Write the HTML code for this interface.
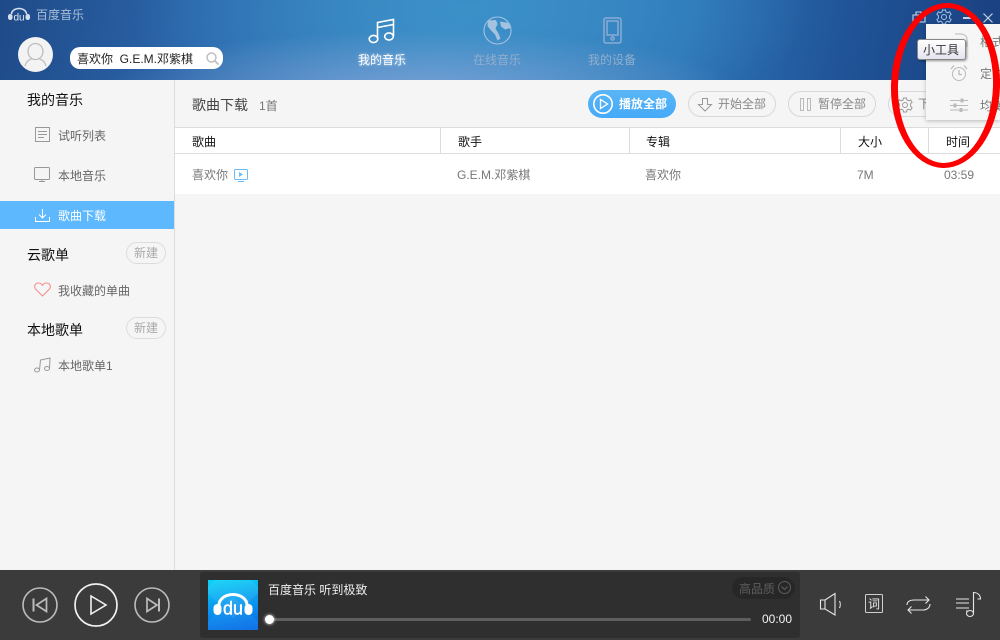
<!DOCTYPE html>
<html lang="zh"><head><meta charset="utf-8"><style>
html,body{margin:0;padding:0}
body{width:1000px;height:640px;overflow:hidden;position:relative;background:#f5f5f5;font-family:"Liberation Sans","Noto Sans CJK SC",sans-serif;font-size:12px;color:#666}
.t{position:absolute;white-space:nowrap;line-height:16px}
.a{position:absolute}
svg{position:absolute;overflow:visible;fill:none}
#hd{left:0;top:0;width:1000px;height:80px;background:radial-gradient(ellipse 320px 62px at 420px 92px,rgba(130,165,215,.85),rgba(125,160,210,0) 100%),radial-gradient(ellipse 340px 130px at 470px 10px,#3b90c8,rgba(59,144,200,0) 100%),linear-gradient(100deg,#1f4a88 0,#2b66ab 20%,#3b86c3 45%,#2d74b6 68%,#1f5296 85%,#1a407f 100%)}
.btn{position:absolute;top:91px;height:24px;border:1px solid #d9d9d9;border-radius:13px;box-sizing:content-box}
.new{position:absolute;left:126px;width:40px;height:22px;border:1px solid #dcdcdc;border-radius:11px;box-sizing:border-box;font-size:12px;line-height:20px;text-align:center;color:#aaa}
.th{color:#111;top:134px}
.sep{position:absolute;top:128px;width:1px;height:25px;background:#dcdcdc}
.hs{font-size:14px;color:#111}
</style></head><body>
<div class="a" id="hd"></div>
<svg style="left:8px;top:8px" width="22" height="13" viewBox="0 0 22 13"><path d="M3.500 6a7.500 5.500 0 0 1 15 0" stroke="#d3dfec" stroke-width="1.600"/><rect x="0" y="6" width="4.500" height="6" rx="2.200" fill="#d3dfec"/><rect x="17.500" y="6" width="4.500" height="6" rx="2.200" fill="#d3dfec"/><text x="11" y="12.500" text-anchor="middle" font-size="10" font-family="Liberation Sans" fill="#e4ebf3">du</text></svg>
<div class="t" style="left:36px;top:7px;color:#a9bfd8">百度音乐</div>
<div class="a" style="left:18px;top:37px;width:35px;height:35px;border-radius:50%;background:#f3f3f3"></div>
<svg style="left:18px;top:37px" width="35" height="35" viewBox="0 0 35 35"><ellipse cx="17.500" cy="14.500" rx="7.500" ry="8" stroke="#bdbdbd" stroke-width="1.300"/><path d="M7 29c1-4 3-6 6.500-7M28 29c-1-4-3-6-6.500-7" stroke="#bdbdbd" stroke-width="1.300"/></svg>
<div class="a" style="left:70px;top:47px;width:153px;height:22px;border-radius:10px;background:#fff"></div>
<div class="t" style="left:77px;top:51px;color:#222">喜欢你&nbsp; G.E.M.邓紫棋</div>
<svg style="left:206px;top:52px" width="13" height="13" viewBox="0 0 13 13"><circle cx="5.500" cy="5.500" r="4.500" stroke="#c0c0c0" stroke-width="1.500"/><path d="M9 9l3.500 3.500" stroke="#c0c0c0" stroke-width="1.800"/></svg>

<svg style="left:368px;top:18px" width="28" height="26" viewBox="0 0 28 26" stroke="#fff" stroke-width="1.600"><ellipse cx="5.500" cy="21" rx="4.300" ry="3.600"/><ellipse cx="21" cy="18.500" rx="4.300" ry="3.600"/><path d="M9.500 20.500V4.500L25.500 1.500V18M9.500 9.500l16-3"/></svg>
<div class="t" style="left:358px;top:52px;color:#fff;text-shadow:0 0 3px rgba(255,255,255,.6)">我的音乐</div>
<svg style="left:483px;top:16px" width="29" height="29" viewBox="0 0 29 29"><circle cx="14.500" cy="14.500" r="13.500" stroke="#a3c2e0" stroke-width="1.100"/><path d="M5 4.500L13 4l1.500 4-2 4.500 3 5 2 5-3 2-2.500-6-4-4-3.500-4.500zM17 5.500l9 1.500 1.500 5-5.500 1.500-4-3z" fill="#a3c2e0"/></svg>
<div class="t" style="left:473px;top:52px;color:#91aecd">在线音乐</div>
<svg style="left:603px;top:17px" width="19" height="27" viewBox="0 0 19 27" stroke="#8aacd4" stroke-width="1.500"><rect x="1" y="1" width="17" height="25" rx="2"/><rect x="4" y="4" width="11" height="14"/><circle cx="9.500" cy="21.500" r="1.600"/></svg>
<div class="t" style="left:588px;top:52px;color:#91aecd">我的设备</div>

<svg style="left:912px;top:11px" width="14" height="12" viewBox="0 0 14 12" stroke="#c9d6e6" stroke-width="1.100"><path d="M1 4h12v7H1zM4 4V1h5v3"/></svg>
<svg style="left:936px;top:9px" width="16" height="16" viewBox="0 0 16 16" stroke="#a9c0dc" stroke-width="1"><path d="M6.500 1h3l.5 2 1.800.8 1.800-1 1.500 2.600-1.500 1.200v2.800l1.500 1.200-1.500 2.600-1.800-1-1.800.8-.5 2h-3l-.5-2-1.800-.8-1.800 1L.9 10.600l1.500-1.200V6.600L.9 5.400l1.500-2.600 1.800 1L6 3z"/><circle cx="8" cy="8" r="2.500"/></svg>
<div class="a" style="left:963px;top:17px;width:10px;height:2px;background:#c5d3e4"></div>
<svg style="left:983px;top:13px" width="10" height="10" viewBox="0 0 10 10" stroke="#c5d3e4" stroke-width="1.200"><path d="M.5.500l9 9M9.500.500l-9 9"/></svg>

<!-- sidebar -->
<div class="a" style="left:174px;top:80px;width:1px;height:490px;background:#dcdcdc"></div>
<div class="t hs" style="left:27px;top:92px">我的音乐</div>
<svg style="left:35px;top:127px" width="15" height="15" viewBox="0 0 15 15" stroke="#999"><rect x=".5" y=".5" width="14" height="14"/><path d="M3 4.500h9M3 7.500h9M3 10.500h6"/></svg>
<div class="t" style="left:58px;top:128px">试听列表</div>
<svg style="left:34px;top:167px" width="16" height="15" viewBox="0 0 16 15" stroke="#999"><rect x=".5" y=".5" width="15" height="12" rx="1"/><path d="M5 14.500h6M7 13h2"/></svg>
<div class="t" style="left:58px;top:168px">本地音乐</div>
<div class="a" style="left:0;top:201px;width:174px;height:28px;background:#5db8fd"></div>
<svg style="left:35px;top:209px" width="15" height="13" viewBox="0 0 15 13" stroke="#fff"><path d="M7.500 0v9M4 5.500l3.500 3.500 3.500-3.500M.5 8v4.500h14V8"/></svg>
<div class="t" style="left:58px;top:208px;color:#fff">歌曲下载</div>
<div class="t hs" style="left:27px;top:247px">云歌单</div>
<div class="new" style="top:242px">新建</div>
<svg style="left:34px;top:282px" width="17" height="15" viewBox="0 0 17 15" stroke="#f58e8e" stroke-width="1.100"><path d="M8.500 14L1.500 7C-.5 4 1.500 1 4.500 1c2 0 3.200 1 4 2.300C9.300 2 10.500 1 12.500 1c3 0 5 3 3 6z"/></svg>
<div class="t" style="left:58px;top:283px">我收藏的单曲</div>
<div class="t hs" style="left:27px;top:322px">本地歌单</div>
<div class="new" style="top:317px">新建</div>
<svg style="left:34px;top:357px" width="17" height="16" viewBox="0 0 17 16" stroke="#999"><ellipse cx="3" cy="13" rx="2.500" ry="2"/><ellipse cx="13" cy="11.500" rx="2.500" ry="2"/><path d="M5.500 13L6.500 3 16 1l-.5 10.500"/></svg>
<div class="t" style="left:58px;top:358px">本地歌单1</div>

<!-- main -->
<div class="t" style="left:192px;top:97px;color:#444;font-size:14px">歌曲下载</div>
<div class="t" style="left:259px;top:98px;color:#777">1首</div>
<div class="a" style="left:588px;top:90px;width:88px;height:28px;border-radius:14px;background:linear-gradient(#5ab5f5,#46aaf8)"></div>
<svg style="left:593px;top:94px" width="20" height="20" viewBox="0 0 20 20" stroke="#fff"><circle cx="10" cy="10" r="9.200" stroke-width="1.600"/><path d="M7.500 5.500v9l7-4.500z" stroke-width="1.300"/></svg>
<div class="t" style="left:619px;top:96px;color:#fff;font-weight:bold">播放全部</div>
<div class="btn" style="left:688px;width:86px"></div>
<svg style="left:698px;top:97px" width="14" height="15" viewBox="0 0 14 15" stroke="#999"><path d="M4.500 1.500h5v6h4L7 14 .5 7.500h4z"/></svg>
<div class="t" style="left:718px;top:96px;color:#888">开始全部</div>
<div class="btn" style="left:788px;width:86px"></div>
<svg style="left:800px;top:98px" width="11" height="13" viewBox="0 0 11 13" stroke="#bbb"><rect x=".5" y=".5" width="3" height="12"/><rect x="7.500" y=".5" width="3" height="12"/></svg>
<div class="t" style="left:818px;top:96px;color:#888">暂停全部</div>
<div class="btn" style="left:888px;width:60px"></div>
<svg style="left:897px;top:97px" width="16" height="16" viewBox="0 0 16 16" stroke="#999" stroke-width="1"><path d="M6.500 1h3l.5 2 1.800.8 1.800-1 1.500 2.600-1.500 1.200v2.800l1.500 1.200-1.500 2.600-1.800-1-1.800.8-.5 2h-3l-.5-2-1.800-.8-1.800 1L.9 10.600l1.500-1.200V6.600L.9 5.400l1.500-2.600 1.800 1L6 3z"/><circle cx="8" cy="8" r="2.500"/></svg>
<div class="t" style="left:918px;top:96px;color:#888">下</div>

<div class="a" style="left:175px;top:127px;width:825px;height:67px;background:#fff"></div>
<div class="a" style="left:175px;top:127px;width:825px;height:1px;background:#dcdcdc"></div>
<div class="a" style="left:175px;top:153px;width:825px;height:1px;background:#dcdcdc"></div>
<div class="sep" style="left:440px"></div><div class="sep" style="left:629px"></div><div class="sep" style="left:840px"></div><div class="sep" style="left:928px"></div>
<div class="t th" style="left:192px">歌曲</div>
<div class="t th" style="left:458px">歌手</div>
<div class="t th" style="left:646px">专辑</div>
<div class="t th" style="left:858px">大小</div>
<div class="t th" style="left:946px">时间</div>
<div class="t" style="left:192px;top:167px;color:#777">喜欢你</div>
<svg style="left:234px;top:169px" width="14" height="13" viewBox="0 0 14 13"><rect x=".5" y=".5" width="13" height="10" rx="1" stroke="#6cbcf8"/><path d="M5 3v5l4-2.500z" fill="#6cbcf8"/><path d="M4 12.500h6" stroke="#6cbcf8"/></svg>
<div class="t" style="left:457px;top:167px;color:#777">G.E.M.邓紫棋</div>
<div class="t" style="left:645px;top:167px;color:#777">喜欢你</div>
<div class="t" style="left:857px;top:167px;color:#777">7M</div>
<div class="t" style="left:944px;top:167px;color:#777">03:59</div>

<!-- dropdown -->
<div class="a" style="left:926px;top:24px;width:74px;height:96px;background:#f6f6f6;box-shadow:0 1px 4px rgba(0,0,0,.25)"></div>
<svg style="left:952px;top:33px" width="16" height="14" viewBox="0 0 16 14" stroke="#bbb"><path d="M3 1h6c3 0 6 2 6 5v8"/></svg>
<div class="t" style="left:980px;top:34px;color:#777">格式</div>
<svg style="left:950px;top:64px" width="18" height="18" viewBox="0 0 18 18" stroke="#bbb"><circle cx="9" cy="10" r="6.500"/><path d="M9 6v4.500h3M1 5l3-3.500M17 5l-3-3.500" stroke-width="1.300"/></svg>
<div class="t" style="left:980px;top:66px;color:#777">定时</div>
<svg style="left:950px;top:98px" width="18" height="14" viewBox="0 0 18 14" stroke="#bbb"><path d="M0 2.500h18M0 7.500h18M0 12h18"/><path d="M11 1h2v3h-2zM4 6h2v3H4zM10 10.500h2v3h-2z" fill="#bbb"/></svg>
<div class="t" style="left:980px;top:98px;color:#777">均衡</div>
<div class="a" style="left:917px;top:39px;width:49px;height:21px;border:1px solid #888;border-radius:3px;box-sizing:border-box;background:linear-gradient(#fff,#e4e4f0);box-shadow:1px 1px 2px rgba(0,0,0,.4)"></div>
<div class="t" style="left:923px;top:42px;color:#333">小工具</div>

<!-- player -->
<div class="a" style="left:0;top:570px;width:1000px;height:70px;background:#3b3b3b"></div>
<div class="a" style="left:200px;top:572px;width:600px;height:66px;background:#2f2f2f;border-radius:3px"></div>
<svg style="left:22px;top:587px" width="36" height="36" viewBox="0 0 36 36" stroke="#bcbcbc"><circle cx="18" cy="18" r="17" stroke-width="1.600"/><path d="M11.500 11.500v13" stroke-width="2"/><path d="M24.500 11.500v13L14.500 18z" stroke-width="1.700"/></svg>
<svg style="left:74px;top:583px" width="44" height="44" viewBox="0 0 44 44" stroke="#f0f0f0"><circle cx="22" cy="22" r="21" stroke-width="1.700"/><path d="M17 13v18l15-9z" stroke-width="1.600"/></svg>
<svg style="left:134px;top:587px" width="36" height="36" viewBox="0 0 36 36" stroke="#bcbcbc"><circle cx="18" cy="18" r="17" stroke-width="1.600"/><path d="M25 11.500v13" stroke-width="2"/><path d="M13 11.500v13L23 18z" stroke-width="1.700"/></svg>
<div class="a" style="left:208px;top:580px;width:50px;height:50px;overflow:hidden;background:linear-gradient(170deg,#0ad4f6 0,#0a9cf0 45%,#0668e6 100%)"><div class="a" style="left:5px;top:-10px;width:40px;height:40px;transform:rotate(45deg);background:rgba(255,255,255,.08)"></div><div class="a" style="left:5px;top:25px;width:40px;height:40px;transform:rotate(45deg);background:rgba(255,255,255,.05)"></div></div>
<svg style="left:214px;top:593px" width="38" height="22" viewBox="0 0 38 22"><path d="M5 12a14 10.500 0 0 1 28 0" stroke="#fff" stroke-width="3"/><rect x="-.5" y="11" width="8" height="11" rx="4" fill="#fff"/><rect x="30.500" y="11" width="8" height="11" rx="4" fill="#fff"/><text x="19" y="21.500" text-anchor="middle" font-size="18" font-family="Liberation Sans" fill="#fff" stroke="#fff" stroke-width=".4">du</text></svg>
<div class="t" style="left:268px;top:582px;color:#eee">百度音乐 听到极致</div>
<div class="a" style="left:272px;top:618px;width:479px;height:3px;background:#5e5e5e;border-radius:2px"></div>
<div class="a" style="left:265px;top:615px;width:9px;height:9px;border-radius:50%;background:#fff;box-shadow:0 0 3px #fff"></div>
<div class="a" style="left:732px;top:577px;width:63px;height:22px;border-radius:11px;background:#272727"></div>
<div class="t" style="left:739px;top:581px;color:#5e5e5e">高品质</div>
<svg style="left:778px;top:581px" width="13" height="13" viewBox="0 0 13 13" stroke="#5e5e5e"><circle cx="6.500" cy="6.500" r="6"/><path d="M3.500 5.500l3 3 3-3"/></svg>
<div class="t" style="left:762px;top:611px;color:#f2f2f2">00:00</div>
<svg style="left:820px;top:593px" width="22" height="22" viewBox="0 0 22 22" stroke="#e6e6e6" stroke-width="1.100"><path d="M.5 7H5v9H.5zM5 7L15 .5V22L5 16zM19.500 8c1 2 1 5 0 7"/></svg>
<svg style="left:865px;top:594px" width="18" height="19" viewBox="0 0 18 19" stroke="#d0d0d0"><rect x=".5" y=".5" width="17" height="18" rx="1"/></svg>
<div class="t" style="left:868px;top:596px;color:#eee">词</div>
<svg style="left:906px;top:595px" width="25" height="19" viewBox="0 0 25 19" stroke="#e6e6e6" stroke-width="1.100"><path d="M1 10C1 6.500 4 5 8 5H23M19.500 1.500L23 5l-3.500 3.500M24 9c0 3.500-3 6-7 6H2M5.500 11.500L2 15l3.500 3.500"/></svg>
<svg style="left:955px;top:592px" width="27" height="26" viewBox="0 0 27 26" stroke="#e6e6e6" stroke-width="1.100"><path d="M1 7h13M1 11h13M1 16h13M11 19h3"/><ellipse cx="15" cy="21.500" rx="3.500" ry="3"/><path d="M18.500 21.500V.5c4 0 7 2.500 7 6.500h-3"/></svg>

<!-- red annotation -->
<svg style="left:0;top:0" width="1000" height="640"><path transform="rotate(2 945.5 85.5)" fill="#fe0000" fill-rule="evenodd" d="M891 85.500a54.500 82.500 0 1 0 109 0a54.500 82.500 0 1 0-109 0zM898 85.500a47.500 77.500 0 1 0 95 0a47.500 77.500 0 1 0-95 0z"/></svg>
</body></html>
